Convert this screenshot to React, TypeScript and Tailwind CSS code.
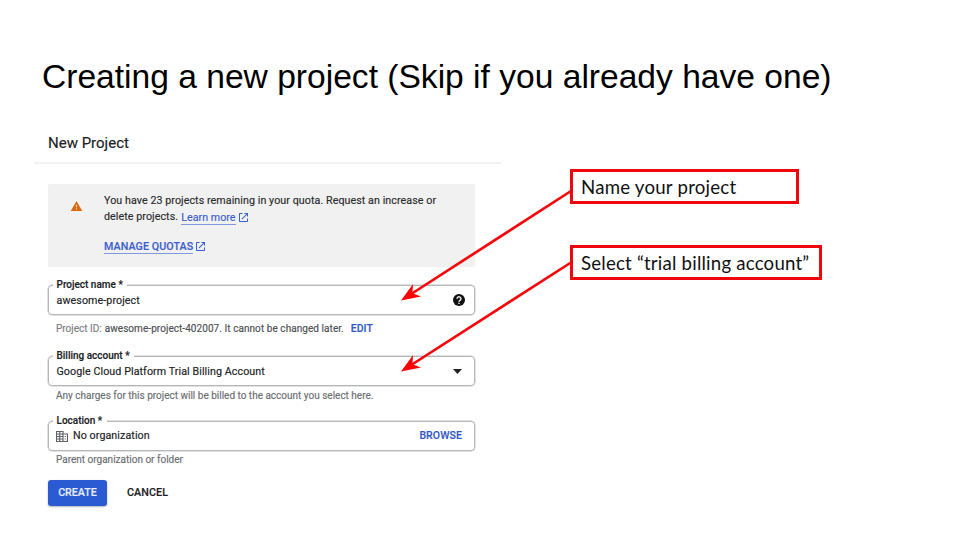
import type { ReactNode } from "react";

function ExternalIcon() {
  return (
    <svg className="h-[9px] w-[9px] shrink-0" viewBox="0 0 18 18" fill="#3b5fd0">
      <path d="M16 16H2V2h5V0H1.500Q0 0 0 1.500V16.500Q0 18 1.500 18H16.500Q18 18 18 16.500V11H16zM11 0v2h3.600L5 11.600 6.400 13 16 3.400V7h2V0z" />
    </svg>
  );
}

function Field({ label, gap, children }: { label: string; gap: string; children: ReactNode }) {
  return (
    <div className="relative flex h-[30px] w-[427px] shrink-0 items-center rounded-[4px] border border-[#b4b6b9] pl-[7.500px] text-[#202124] shadow-[0_0_0_0.500px_#c4c6c8]">
      <span
        className={`absolute -top-[7px] left-[4px] h-[12px] bg-white pl-[3.500px] text-[10px] font-medium leading-[12px] whitespace-nowrap ${gap}`}
      >
        {label}
      </span>
      {children}
    </div>
  );
}

function Arrow({ y1, y2 }: { y1: number; y2: number }) {
  return (
    <g>
      <line x1="571" y1={y1} x2="412" y2={y2 - 7} stroke="#f60509" strokeWidth="2.670" />
      <path
        d="M0 0 L19 -7.300 L13.500 0 L19 7.300 Z"
        fill="#ff0000"
        transform={`translate(401 ${y2}) rotate(-32.700)`}
      />
    </g>
  );
}

function Form() {
  return (
    <section className="flex w-[467px] shrink-0 flex-col font-['Roboto',sans-serif] [-webkit-text-stroke:0.150px_currentColor]">
      <header className="flex h-[42px] items-center border-b-2 border-[#f1f1f2] pl-[14px] pt-[2px] text-[15px] leading-[20px] text-[#202124]">
        <span>New Project</span>
      </header>

      <div className="flex flex-col pl-[14px]">
        <div className="mt-[20px] flex h-[83px] w-[427px] rounded-[2px] bg-[#f1f1f1] pl-[22px] text-[10.7px] leading-[16px] text-[#2a2b2d]">
          <svg className="mt-[17px] h-[10px] w-[13px]" viewBox="0 0 22 19">
            <path d="M0 19h22L11 0z" fill="#d9690f" />
            <path d="M10 7h2v5h-2zM10 14h2v2h-2z" fill="#f6dcc6" />
          </svg>
          <div className="ml-[21px] pt-[9px] whitespace-nowrap">
            <p className="tracking-[0.070px]">You have 23 projects remaining in your quota. Request an increase or</p>
            <p className="flex h-[16px] items-center">
              <span className="tracking-[0.070px]">delete projects.</span>
              <a className="ml-[3px] h-[15px] border-b border-[#7f98e3] leading-[15px] tracking-[0.030px] text-[#3b5fd0]">Learn more</a>
              <span className="ml-[3px]"><ExternalIcon /></span>
            </p>
            <p className="mt-[13px] flex h-[16px] items-center font-medium">
              <a className="h-[15px] border-b border-[#7f98e3] leading-[15px] tracking-[0.080px] text-[#3b5fd0]">MANAGE QUOTAS</a>
              <span className="ml-[3px]"><ExternalIcon /></span>
            </p>
          </div>
        </div>

        <div className="mt-[18px] flex">
          <Field label="Project name *" gap="w-[74px]">
            <span className="pt-[2px] text-[10.7px] tracking-[0.090px]">awesome-project</span>
            <svg className="ml-auto mr-[9px] h-[12px] w-[12px]" viewBox="0 0 20 20">
              <circle cx="10" cy="10" r="10" fill="#111" />
              <path d="M6.800 7.800a3.200 3.200 0 1 1 4.900 2.700C10.500 11.300 10 11.700 10 13" fill="none" stroke="#fff" strokeWidth="2.300" />
              <rect x="8.900" y="14.500" width="2.200" height="2.200" fill="#fff" />
            </svg>
          </Field>
        </div>
        <p className="mt-[7px] flex h-[14px] items-center pl-[8px] text-[10px] leading-[14px] whitespace-nowrap text-[#4d5054]">
          <span className="text-[#7b7e82]">Project ID:</span>
          <span className="ml-[3px] tracking-[0.060px]">awesome-project-402007. It cannot be changed later.</span>
          <b className="ml-[7px] text-[10.5px] font-medium text-[#3158c8]">EDIT</b>
        </p>

        <div className="mt-[20px] flex">
          <Field label="Billing account *" gap="w-[81px]">
            <span className="pt-[2px] text-[10.7px] tracking-[0.080px]">Google Cloud Platform Trial Billing Account</span>
            <svg className="ml-auto mr-[12px] h-[5px] w-[9px]" viewBox="0 0 9 5">
              <path d="M0 0h9L4.500 5z" fill="#202124" />
            </svg>
          </Field>
        </div>
        <p className="mt-[3px] h-[14px] pl-[8px] text-[10px] leading-[14px] whitespace-nowrap text-[#6b6e72]">
          Any charges for this project will be billed to the account you select here.
        </p>

        <div className="mt-[18px] flex">
          <Field label="Location *" gap="w-[54px]">
            <svg className="-ml-[0.500px] h-[11px] w-[12px]" viewBox="0 0 24 22" fill="none" stroke="#5f6368" strokeWidth="2.300">
              <path d="M1 1h13v20H1zM7.500 1v20M1 6h13M1 11h13M1 16h13M14 6h9v15h-9M17.500 11h2.500M17.500 16h2.500" />
            </svg>
            <span className="ml-[5px] text-[10.7px] tracking-[0.080px]">No organization</span>
            <b className="ml-auto mr-[12px] text-[10.5px] font-medium tracking-[0.100px] text-[#3158c8]">BROWSE</b>
          </Field>
        </div>
        <p className="mt-[2px] h-[14px] pl-[8px] text-[10px] leading-[14px] whitespace-nowrap text-[#6b6e72]">
          Parent organization or folder
        </p>

        <div className="mt-[13px] flex items-center text-[10.7px] font-medium">
          <button className="h-[26px] w-[59px] rounded-[3px] bg-[#2b5bd2] pt-[1px] text-[#e6ecfb] shadow-[0_1px_2px_rgba(0,0,0,0.300)]">CREATE</button>
          <button className="ml-[20px] pt-[1px] tracking-[0.100px] text-[#202124]">CANCEL</button>
        </div>
      </div>
    </section>
  );
}

export default function App() {
  return (
    <main className="relative flex h-[540px] w-[960px] flex-col overflow-hidden bg-white">
      <h1 className="mt-[56px] ml-[42px] h-[42px] text-[33.600px] leading-[42px] whitespace-nowrap text-black font-['Liberation_Sans',Arial,sans-serif]">
        Creating a new project (Skip if you already have one)
      </h1>
      <div className="mt-[24px] ml-[34px] flex">
        <Form />
        <aside className="ml-[69px] flex flex-col pt-[47px] font-['Lato',sans-serif] text-[18.67px] leading-[24px] whitespace-nowrap text-[#111]">
          <div className="flex h-[35px] w-[229px] items-center border-[3px] border-[#ee080d] pl-[8px]">
            <span className="tracking-[0.220px]">Name your project</span>
          </div>
          <div className="mt-[41px] flex h-[35px] w-[252px] items-center border-[3px] border-[#ee080d] pl-[8px]">
            <span className="tracking-[0.200px]">Select “trial billing account”</span>
          </div>
        </aside>
      </div>
      <svg className="pointer-events-none absolute top-0 left-0 h-[540px] w-[960px]" viewBox="0 0 960 540">
        <Arrow y1={191} y2={300.500} />
        <Arrow y1={262.500} y2={371.500} />
      </svg>
    </main>
  );
}
